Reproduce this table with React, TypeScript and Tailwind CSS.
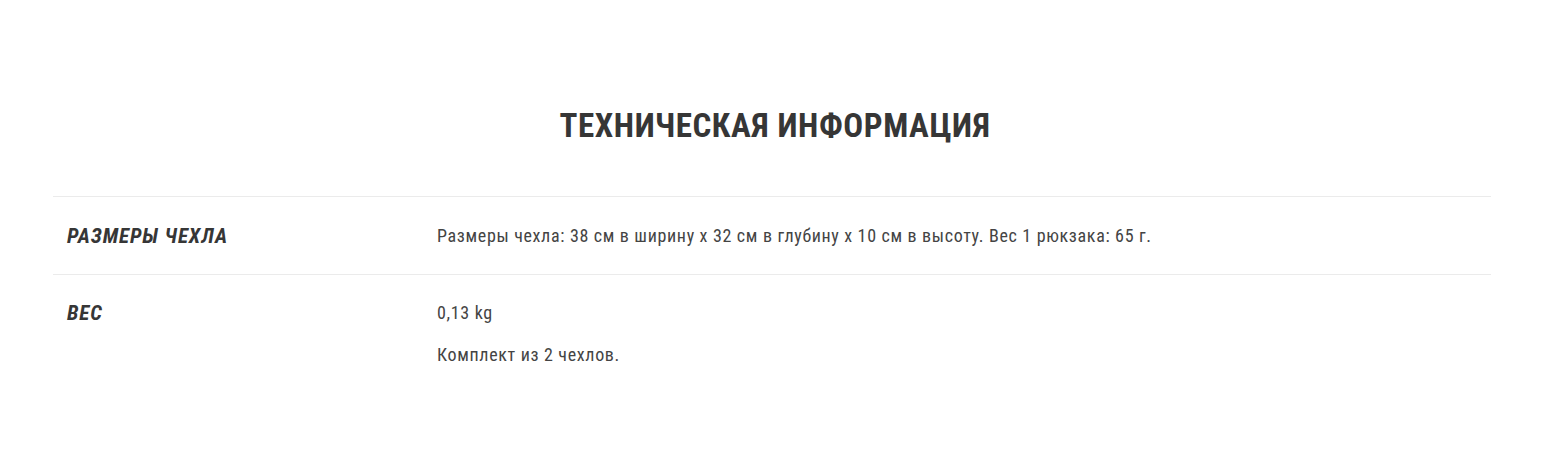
const FONT = { fontFamily: '"Roboto Condensed", Roboto, "Liberation Sans", sans-serif' };

const rows: { label: string; values: string[] }[] = [
  {
    label: 'РАЗМЕРЫ ЧЕХЛА',
    values: ['Размеры чехла: 38 см в ширину x 32 см в глубину x 10 см в высоту. Вес 1 рюкзака: 65 г.']
  },
  { label: 'ВЕС', values: ['0,13 kg', 'Комплект из 2 чехлов.'] }
];

export default function App() {
  return (
    <div className="min-h-[476px] bg-white text-[#363636] font-stretch-condensed" style={FONT}>
      <h2 className="pt-[106px] text-center text-[33px] font-bold leading-[40px] tracking-[0.6px]">
        ТЕХНИЧЕСКАЯ ИНФОРМАЦИЯ
      </h2>
      <div className="ml-[53px] mt-[50px] w-[1438px] border-t border-[#ebebeb]">
        {rows.map((row, i) => (
          <div key={row.label} className={i === 0 ? 'flex border-b border-[#ebebeb] pt-[25px] pb-[24px]' : 'flex pt-[24px]'}>
            <div className="w-[384px] shrink-0 pl-[14px] text-[21px] font-bold italic leading-[28px] tracking-[0.9px]">
              {row.label}
            </div>
            <div className="flex flex-col gap-[18px] pt-[2px] text-[18px] leading-[24px] tracking-[0.66px] text-[#444444]">
              {row.values.map(v => (
                <p key={v}>{v}</p>
              ))}
            </div>
          </div>
        ))}
      </div>
    </div>
  );
}
